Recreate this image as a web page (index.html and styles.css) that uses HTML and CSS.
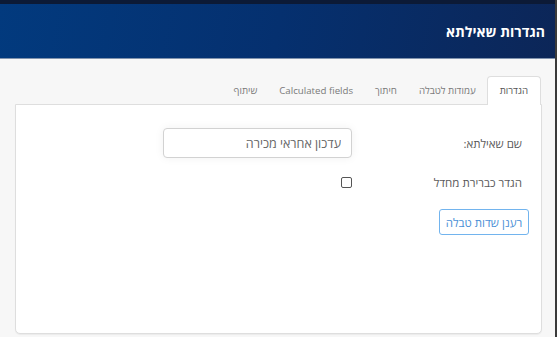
FILE: index.html
```html
<!DOCTYPE html>
<html lang="he" dir="rtl">
<head>
    <meta charset="UTF-8">
    <title>הגדרות שאילתא</title>
    <link rel="stylesheet" href="styles.css">
</head>
<body>
<div class="page">
    <div class="topbar"></div>
    <div class="header">
        <h1>הגדרות שאילתא</h1>
    </div>
    <div class="content">
        <ul class="tabs">
            <li class="active">הגדרות</li>
            <li>עמודות לטבלה</li>
            <li>חיתוך</li>
            <li>Calculated fields</li>
            <li>שיתוף</li>
        </ul>
        <div class="panel">
            <div class="row">
                <label class="label">שם שאילתא:</label>
                <div class="field">
                    <input class="input" type="text" value="עדכון אחראי מכירה">
                </div>
            </div>
            <div class="row row-check">
                <label class="label">הגדר כברירת מחדל</label>
                <div class="field">
                    <input class="check" type="checkbox">
                </div>
            </div>
            <button class="btn">רענן שדות טבלה</button>
        </div>
    </div>
</div>
</body>
</html>
```

FILE: styles.css
```css
*{
    margin: 0;
    padding: 0;
    box-sizing: border-box;
}
body{
    width: 557px;
    height: 337px;
    overflow: hidden;
    font-family: "Open Sans", "Noto Sans", sans-serif;
    background-color: #f7f7f7;
}
.page{
    height: 337px;
    border-right: 2px solid #3a3a3a;
    display: flex;
    flex-direction: column;
}
.topbar{
    height: 4px;
    background-color: #0c1a36;
}
.header{
    height: 55px;
    background: linear-gradient(100deg, #023a7e 0%, #05306f 50%, #0c2658 100%);
    border-bottom: 1px solid #8193ad;
    display: flex;
    align-items: center;
    padding-right: 10px;
}
.header h1{
    color: #fff;
    font-size: 14px;
    font-weight: bold;
    margin-top: 1px;
}
.content{
    flex: 1;
    padding: 17px 13px 3px 15px;
    display: flex;
    flex-direction: column;
}
.tabs{
    list-style: none;
    display: flex;
    padding-right: 1px;
    margin-bottom: -1px;
    position: relative;
    z-index: 1;
}
.tabs li{
    height: 29px;
    line-height: 28px;
    padding: 0 10px;
    font-size: 9.7px;
    color: #7a7a7a;
    border: 1px solid transparent;
    border-bottom: none;
}
.tabs li.active{
    background-color: #fff;
    border-color: #dedede;
    border-radius: 4px 4px 0 0;
    color: #555;
    padding: 0 12px;
}
.panel{
    flex: 1;
    background-color: #fff;
    border: 1px solid #dedede;
    border-radius: 0 0 5px 5px;
    box-shadow: 0 1px 1px rgba(0,0,0,0.05);
    padding: 23px 12px 0 14px;
    display: flex;
    flex-direction: column;
    align-items: flex-start;
}
.row{
    display: grid;
    grid-template-columns: 177px 189px;
    align-items: center;
    height: 30px;
    width: 100%;
}
.row-check{
    height: 20px;
    margin-top: 14px;
}
.label{
    font-size: 11.5px;
    color: #5a5a5a;
    padding-right: 7px;
}
.input{
    width: 189px;
    height: 30px;
    border: 1px solid #d2d2d2;
    border-radius: 4px;
    padding: 0 10px;
    font-family: "Open Sans", "Noto Sans", sans-serif;
    font-size: 12.5px;
    color: #666;
    box-shadow: 0 0 10px rgba(0,0,0,0.06);
    outline: none;
}
.check{
    appearance: none;
    width: 11px;
    height: 11px;
    border: 1px solid #555;
    border-radius: 2px;
    display: block;
    background-color: #fff;
}
.btn{
    margin-top: 17px;
    height: 26px;
    width: 90px;
    background-color: #fff;
    border: 1px solid #72b4ee;
    border-radius: 3px;
    color: #4a8fd6;
    font-family: "Open Sans", "Noto Sans", sans-serif;
    font-size: 11.5px;
}
```
